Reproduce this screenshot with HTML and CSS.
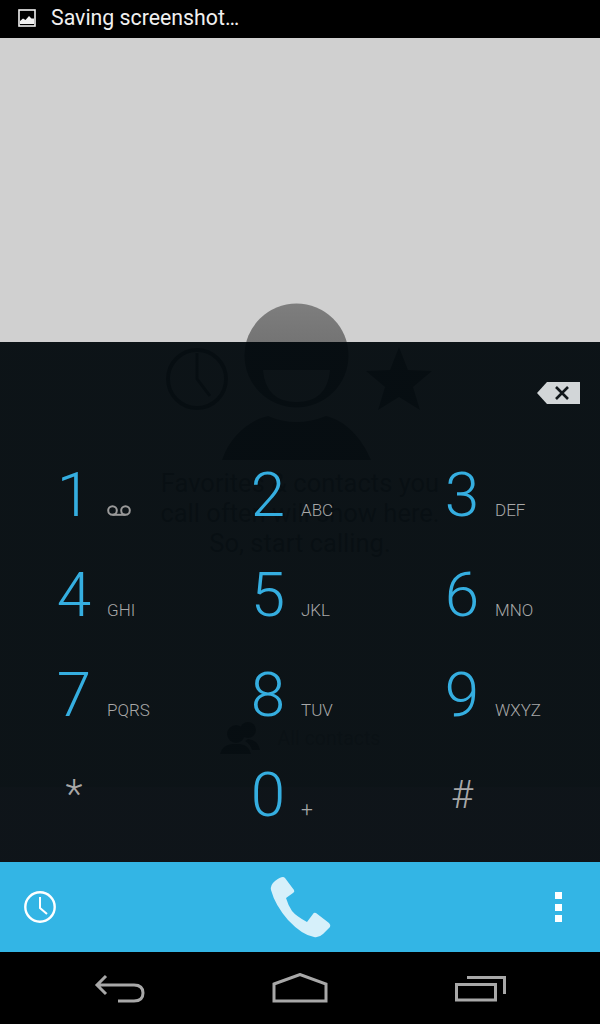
FILE: index.html
```html
<!DOCTYPE html>
<html lang="en">
  <head>
    <meta charset="UTF-8" />
    <meta name="viewport" content="width=device-width, initial-scale=1.0" />
    <title>Phone</title>
    <link rel="stylesheet" href="styles.css">
  </head>
  <body>
    <div class="screen">
      <div class="status-bar">
        <svg class="status-icon" viewBox="0 0 18 18" width="18" height="18">
          <rect x="1" y="1" width="16" height="16" fill="none" stroke="#f2f2f2" stroke-width="1.6" />
          <path d="M2 15V12L5 9.500L7.500 11L11 7L13.500 9.500L16 9.500V15Z" fill="#f2f2f2" />
        </svg>
        <span class="status-text">Saving screenshot…</span>
      </div>

      <div class="main">
        <div class="favorites">
          <svg class="tabs" viewBox="160 303 280 157" width="280" height="157">
            <defs>
              <linearGradient id="head" gradientUnits="userSpaceOnUse" x1="0" y1="303" x2="0" y2="408">
                <stop offset="0" stop-color="#7e7e7e" />
                <stop offset="0.37" stop-color="#747474" />
                <stop offset="0.37" stop-color="#000" />
                <stop offset="1" stop-color="#000" />
              </linearGradient>
            </defs>
            <circle cx="197" cy="379" r="29" fill="none" stroke="#000" stroke-width="4" />
            <path d="M197 353V379L210 396" fill="none" stroke="#000" stroke-width="3" />
            <circle cx="296.500" cy="355.500" r="52" fill="url(#head)" />
            <path d="M263 370H330Q327 402 296.500 402Q266 402 263 370Z" fill="#d0d0d0" />
            <path d="M222 460C230 436 250 420 268 416Q296 428 326 416C345 420 362 438 371 460Z" fill="#000" />
            <path d="M399 347L408 370L432 371L413 387L420 410L399 397L378 410L385 387L366 371L390 370Z" fill="#000" />
          </svg>
          <div class="favorites-text">Favorites &amp; contacts you<br>call often will show here.<br>So, start calling.</div>
          <div class="all-contacts">
            <svg viewBox="0 0 40 34" width="40" height="34">
              <circle cx="16" cy="13" r="9" fill="#000" />
              <circle cx="28" cy="9" r="8" fill="#000" />
              <path d="M0 33Q2 24 12 23H20Q29 24 31 33Z" fill="#000" />
              <path d="M28 18Q38 19 40 29H32Q30 23 25 20Z" fill="#000" />
            </svg>
            <span>All contacts</span>
          </div>
        </div>

        <div class="dialpad">
          <div class="digits-row">
            <svg viewBox="0 0 43 22" width="43" height="22">
              <path d="M10 0H43V22H10L0 11Z" fill="#d2d6d8" />
              <path d="M19 5L31 17M31 5L19 17" fill="none" stroke="#11171b" stroke-width="2.600" />
            </svg>
          </div>
          <div class="keys">
            <div class="key">
              <span class="digit">1</span>
              <svg class="voicemail" viewBox="0 0 24 11" width="24" height="11">
                <circle cx="5.500" cy="5.500" r="4.300" fill="none" stroke="#9a9a9a" stroke-width="2" />
                <circle cx="18.500" cy="5.500" r="4.300" fill="none" stroke="#9a9a9a" stroke-width="2" />
                <path d="M5.500 9.800H18.500" stroke="#9a9a9a" stroke-width="2" />
              </svg>
            </div>
            <div class="key"><span class="digit">2</span><span class="letters">ABC</span></div>
            <div class="key"><span class="digit">3</span><span class="letters">DEF</span></div>
            <div class="key"><span class="digit">4</span><span class="letters">GHI</span></div>
            <div class="key"><span class="digit">5</span><span class="letters">JKL</span></div>
            <div class="key"><span class="digit">6</span><span class="letters">MNO</span></div>
            <div class="key"><span class="digit">7</span><span class="letters">PQRS</span></div>
            <div class="key"><span class="digit">8</span><span class="letters">TUV</span></div>
            <div class="key"><span class="digit">9</span><span class="letters">WXYZ</span></div>
            <div class="key"><span class="digit symbol star">*</span></div>
            <div class="key"><span class="digit">0</span><span class="letters plus">+</span></div>
            <div class="key"><span class="digit symbol">#</span></div>
          </div>
        </div>
      </div>

      <div class="action-bar">
        <svg class="history" viewBox="0 0 32 32" width="32" height="32">
          <circle cx="16" cy="16" r="14.700" fill="none" stroke="#fff" stroke-width="2.400" />
          <path d="M16 6V17L23 23" fill="none" stroke="#fff" stroke-width="2" />
        </svg>
        <svg viewBox="270 877 62 61" width="62" height="61">
          <path d="M283 877Q280 877 275 881Q270 885 271 890Q275 905 288 920Q302 935 314 937Q319 938 323 934L330 927Q331 925 329 923L316 913Q314 912 313 914L307 922Q296 916 292 911Q288 905 286 898L293 893Q295 892 294 890L285 878Q284 877 283 877Z" fill="#d6f0fa" />
        </svg>
        <div class="overflow"><i></i><i></i><i></i></div>
      </div>

      <div class="nav-bar">
        <svg viewBox="94 975 52 29" width="52" height="29">
          <path d="M106 977L97 986L106 995M97 986H134Q143 986 143 994Q143 1002 134 1002H118" fill="none" stroke="#a8a8a8" stroke-width="3" />
        </svg>
        <svg viewBox="272 974 56 30" width="56" height="30">
          <path d="M274 985L300 975.500L326 985V1002H274Z" fill="none" stroke="#a8a8a8" stroke-width="3" />
        </svg>
        <svg viewBox="455 976 53 29" width="53" height="29">
          <rect x="457.500" y="986.500" width="39" height="15.500" fill="none" stroke="#a8a8a8" stroke-width="3" />
          <path d="M468 979.500H505.500V996" fill="none" stroke="#a8a8a8" stroke-width="3" />
        </svg>
      </div>
    </div>
  </body>
</html>
```

FILE: styles.css
```css
* {
  box-sizing: border-box;
  margin: 0;
  padding: 0;
}
body {
  font-family: Roboto, "Liberation Sans", sans-serif;
  background-color: black;
}
.screen {
  width: 600px;
  height: 1024px;
  display: flex;
  flex-direction: column;
  overflow: hidden;
}

/* Status bar */
.status-bar {
  height: 38px;
  background-color: black;
  color: rgb(240, 240, 240);
  font-size: 21.300px;
  display: flex;
  align-items: center;
  gap: 15px;
  padding: 0 0 2px 18px;
}
.status-icon {
  flex: none;
}
.status-text {
  margin-bottom: 2px;
}

/* Favorites list, seen through the dial pad */
.main {
  flex: 1;
  position: relative;
  background-color: #d0d0d0;
  overflow: hidden;
}
.favorites {
  display: flex;
  flex-direction: column;
  align-items: center;
  padding-top: 265px;
  color: #3c3c3c;
}
.tabs {
  display: block;
}
.favorites-text {
  margin-top: 8px;
  font-size: 25.500px;
  line-height: 30px;
  text-align: center;
}
.all-contacts {
  margin-top: 163px;
  display: flex;
  align-items: center;
  gap: 18px;
  font-size: 19.500px;
  color: #808080;
}

/* Dial pad */
.dialpad {
  position: absolute;
  left: 0;
  right: 0;
  top: 304px;
  bottom: 0;
  background: linear-gradient(rgba(7, 14, 18, 0.972) 445px, rgba(9, 15, 20, 0.972) 445px);
}
.digits-row {
  height: 103px;
  display: flex;
  justify-content: flex-end;
  padding: 40px 20px 0 0;
}
.keys {
  display: grid;
  grid-template-columns: repeat(3, 194px);
  grid-auto-rows: 100px;
  padding-left: 56px;
}
.key {
  display: flex;
  align-items: baseline;
  gap: 15px;
  padding-top: 13px;
}
.digit {
  width: 36px;
  flex: none;
  text-align: center;
  font-size: 62px;
  font-weight: 300;
  line-height: 74px;
  color: #35aee0;
}
.digit.symbol {
  color: #a8a8a8;
  font-size: 38px;
}
.digit.star {
  font-size: 40px;
}
.letters {
  font-size: 17px;
  font-weight: 300;
  color: #a8a8a8;
}
.letters.plus {
  font-size: 21px;
}
.voicemail {
  align-self: flex-start;
  margin-top: 47px;
}

/* Call bar */
.action-bar {
  height: 90px;
  background-color: #33b5e5;
  display: grid;
  grid-template-columns: 246px auto 1fr;
  align-items: center;
  padding: 0 38px 0 24px;
}
.overflow {
  justify-self: end;
  display: flex;
  flex-direction: column;
  gap: 4.500px;
}
.overflow i {
  display: block;
  width: 7px;
  height: 7px;
  background-color: white;
}

/* Navigation buttons */
.nav-bar {
  height: 72px;
  background-color: black;
  display: grid;
  grid-template-columns: repeat(3, 180px);
  padding: 0 30px;
  align-items: center;
  justify-items: center;
}
```
